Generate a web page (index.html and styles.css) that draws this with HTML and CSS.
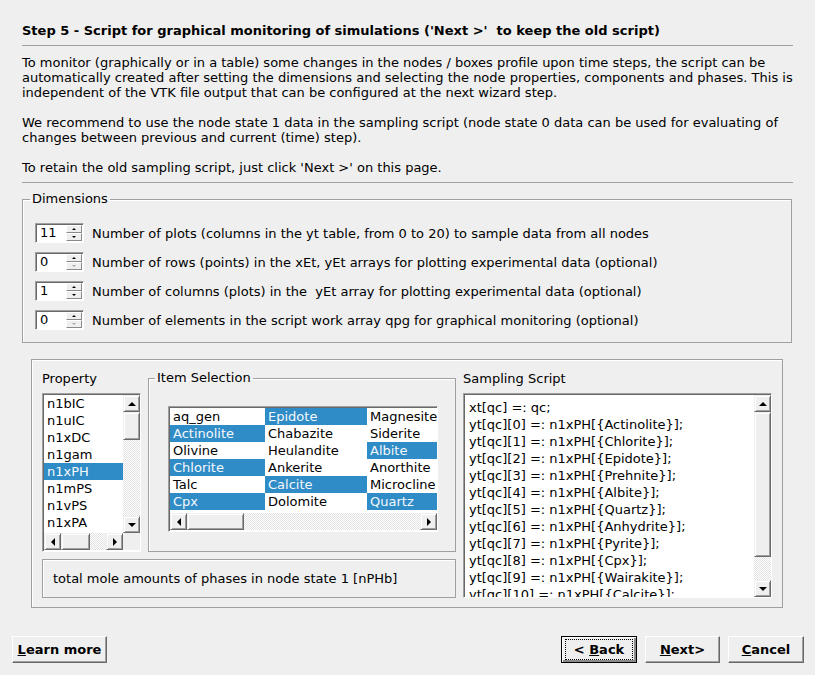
FILE: index.html
```html
<!DOCTYPE html>
<html>
<head>
<meta charset="utf-8">
<link rel="stylesheet" href="styles.css">
</head>
<body>
<div class="wizard">
  <div class="title">Step 5 - Script for graphical monitoring of simulations ('Next &gt;'&nbsp; to keep the old script)</div>
  <div class="rule"></div>
  <div class="intro">To monitor (graphically or in a table) some changes in the nodes / boxes profile upon time steps, the script can be<br>automatically created after setting the dimensions and selecting the node properties, components and phases. This is<br>independent of the VTK file output that can be configured at the next wizard step.<br><br>We recommend to use the node state 1 data in the sampling script (node state 0 data can be used for evaluating of<br>changes between previous and current (time) step).<br><br>To retain the old sampling script, just click 'Next &gt;' on this page.</div>
  <div class="rule rule2"></div>

  <fieldset class="dims">
    <legend>Dimensions</legend>
    <div class="spin-row">
      <div class="spin"><span class="spin-val">11</span><span class="spin-btns"><span class="sbtn"><i class="up"></i></span><span class="sbtn"><i class="down"></i></span></span></div>
      <span>Number of plots (columns in the yt table, from 0 to 20) to sample data from all nodes</span>
    </div>
    <div class="spin-row">
      <div class="spin"><span class="spin-val">0</span><span class="spin-btns"><span class="sbtn"><i class="up"></i></span><span class="sbtn"><i class="down off"></i></span></span></div>
      <span>Number of rows (points) in the xEt, yEt arrays for plotting experimental data (optional)</span>
    </div>
    <div class="spin-row">
      <div class="spin"><span class="spin-val">1</span><span class="spin-btns"><span class="sbtn"><i class="up"></i></span><span class="sbtn"><i class="down"></i></span></span></div>
      <span>Number of columns (plots) in the &nbsp;yEt array for plotting experimental data (optional)</span>
    </div>
    <div class="spin-row">
      <div class="spin"><span class="spin-val">0</span><span class="spin-btns"><span class="sbtn"><i class="up"></i></span><span class="sbtn"><i class="down off"></i></span></span></div>
      <span>Number of elements in the script work array qpg for graphical monitoring (optional)</span>
    </div>
  </fieldset>

  <div class="panel">
    <div class="prop-col">
      <div class="lbl">Property</div>
      <div class="listbox sunken">
        <div class="lb-main">
          <div class="lb-view">
            <div class="row">n1bIC</div>
            <div class="row">n1uIC</div>
            <div class="row">n1xDC</div>
            <div class="row">n1gam</div>
            <div class="row sel">n1xPH</div>
            <div class="row">n1mPS</div>
            <div class="row">n1vPS</div>
            <div class="row">n1xPA</div>
          </div>
          <div class="vscroll">
            <span class="sb-btn"><i class="a-up"></i></span>
            <span class="sb-btn handle-s"></span>
            <span class="track"></span>
            <span class="sb-btn"><i class="a-down"></i></span>
          </div>
        </div>
        <div class="lb-bottom">
          <div class="hscroll">
            <span class="sb-btn"><i class="a-left"></i></span>
            <span class="sb-btn handle-h1"></span>
            <span class="track"></span>
            <span class="sb-btn"><i class="a-right"></i></span>
          </div>
          <span class="corner"></span>
        </div>
      </div>
    </div>

    <fieldset class="items">
      <legend>Item Selection</legend>
      <div class="table sunken">
        <div class="tb-view">
          <div class="trow"><span class="c1">aq_gen</span><span class="c2 sel">Epidote</span><span class="c3">Magnesite</span></div>
          <div class="trow"><span class="c1 sel">Actinolite</span><span class="c2">Chabazite</span><span class="c3">Siderite</span></div>
          <div class="trow"><span class="c1">Olivine</span><span class="c2">Heulandite</span><span class="c3 sel">Albite</span></div>
          <div class="trow"><span class="c1 sel">Chlorite</span><span class="c2">Ankerite</span><span class="c3">Anorthite</span></div>
          <div class="trow"><span class="c1">Talc</span><span class="c2 sel">Calcite</span><span class="c3">Microcline</span></div>
          <div class="trow"><span class="c1 sel">Cpx</span><span class="c2">Dolomite</span><span class="c3 sel">Quartz</span></div>
        </div>
        <div class="hscroll">
          <span class="sb-btn"><i class="a-left"></i></span>
          <span class="sb-btn handle-h2"></span>
          <span class="track"></span>
          <span class="sb-btn"><i class="a-right"></i></span>
        </div>
      </div>
    </fieldset>

    <div class="script-col">
      <div class="lbl">Sampling Script</div>
      <div class="script sunken">
        <div class="script-text">xt[qc] =: qc;<br>yt[qc][0] =: n1xPH[{Actinolite}];<br>yt[qc][1] =: n1xPH[{Chlorite}];<br>yt[qc][2] =: n1xPH[{Epidote}];<br>yt[qc][3] =: n1xPH[{Prehnite}];<br>yt[qc][4] =: n1xPH[{Albite}];<br>yt[qc][5] =: n1xPH[{Quartz}];<br>yt[qc][6] =: n1xPH[{Anhydrite}];<br>yt[qc][7] =: n1xPH[{Pyrite}];<br>yt[qc][8] =: n1xPH[{Cpx}];<br>yt[qc][9] =: n1xPH[{Wairakite}];<br>yt[qc][10] =: n1xPH[{Calcite}];</div>
        <div class="vscroll">
          <span class="sb-btn"><i class="a-up"></i></span>
          <span class="sb-btn handle-v2"></span>
          <span class="track"></span>
          <span class="sb-btn"><i class="a-down"></i></span>
        </div>
      </div>
    </div>

    <div class="desc">total mole amounts of phases in node state 1 [nPHb]</div>
  </div>
</div>

<div class="buttons">
  <button class="btn learn"><u>L</u>earn more</button>
  <div class="btn-group">
    <button class="btn back default"><span class="focus"><span>&lt;&nbsp;<u>B</u>ack</span></span></button>
    <button class="btn next"><u>N</u>ext&gt;</button>
    <button class="btn cancel"><u>C</u>ancel</button>
  </div>
</div>
</body>
</html>
```
FILE: styles.css
```css
html, body {
  margin: 0;
  padding: 0;
  background: #efefef;
}
body {
  width: 815px;
  height: 675px;
  overflow: hidden;
  font-family: "DejaVu Sans", sans-serif;
  font-size: 13px;
  line-height: 15px;
  color: #000;
}
.wizard {
  padding: 23px 22px 0 22px;
}
.title {
  font-weight: bold;
  height: 15px;
  white-space: nowrap;
}
.rule {
  height: 1px;
  background: #a0a0a0;
  margin-top: 7px;
}
.intro {
  margin-top: 9px;
  white-space: nowrap;
}
.rule2 {
  margin-top: 7px;
}

/* Dimensions group */
fieldset {
  margin: 0;
  border: 1px solid #a0a0a0;
  box-shadow: inset 1px 1px 0 #fff;
}
legend {
  line-height: 14px;
  padding: 0 2px;
}
.dims {
  margin: 8px 1px 0 0;
  padding: 16px 0 12px 12px;
}
.dims legend {
  margin-left: -5px;
  line-height: 16px;
}
.spin-row {
  display: flex;
  align-items: center;
  gap: 8px;
  height: 20px;
  white-space: nowrap;
}
.spin-row + .spin-row {
  margin-top: 9px;
}
.spin {
  width: 49px;
  height: 20px;
  box-sizing: border-box;
  display: flex;
  background: #fff;
  border: 1px solid;
  border-color: #a0a0a0 #fff #fff #a0a0a0;
  box-shadow: inset 1px 1px 0 #696969;
  padding: 1px;
}
.spin-val {
  flex: 1;
  padding-left: 3px;
  line-height: 16px;
}
.spin-btns {
  width: 16px;
  display: flex;
  flex-direction: column;
  background: #efefef;
}
.sbtn {
  flex: 1;
  display: flex;
  align-items: center;
  justify-content: center;
  box-sizing: border-box;
  border: 1px solid;
  border-color: #fff #8a8a8a #8a8a8a #fff;
}
.sbtn i {
  width: 0;
  height: 0;
  border-left: 2px solid transparent;
  border-right: 2px solid transparent;
}
.sbtn .up { border-bottom: 2px solid #000; }
.sbtn .down { border-top: 2px solid #000; }
.sbtn .down.off { border-top-color: #a8a8a8; }

/* main panel */
.panel {
  margin: 16px 10px 0 9px;
  border: 1px solid #a0a0a0;
  box-shadow: inset 1px 1px 0 #fff;
  padding: 11px 10px 9px 10px;
  display: grid;
  grid-template-columns: 99px 308px 309px;
  grid-template-rows: 181px 39px;
  column-gap: 7px;
  row-gap: 7px;
}
.lbl {
  height: 15px;
  margin-bottom: 7px;
  white-space: nowrap;
}
.sunken {
  box-sizing: border-box;
  border: 1px solid;
  border-color: #a0a0a0 #fff #fff #a0a0a0;
  box-shadow: inset 1px 1px 0 #696969;
  padding: 1px 0 0 1px;
  background: #fff;
}

.prop-col {
  display: flex;
  flex-direction: column;
}
.listbox {
  height: 159px;
  display: flex;
  flex-direction: column;
}
.lb-main {
  display: flex;
  height: 138px;
}
.lb-view {
  flex: 1;
  overflow: hidden;
}
.row {
  height: 17px;
  line-height: 17px;
  padding-left: 3px;
  white-space: nowrap;
}
.sel {
  background: #308cc6;
  color: #f4f8fc;
}
.lb-bottom {
  display: flex;
  height: 17px;
}
.lb-bottom .hscroll {
  flex: 1;
}
.corner {
  width: 17px;
  background: #efefef;
}

/* scrollbars */
.vscroll {
  width: 17px;
  display: flex;
  flex-direction: column;
  flex-shrink: 0;
}
.hscroll {
  height: 17px;
  display: flex;
}
.track {
  flex: 1;
  background-color: #fff;
  background-image: repeating-conic-gradient(#e2e2e2 0 25%, #fff 0 50%);
  background-size: 2px 2px;
}
.sb-btn {
  width: 17px;
  height: 17px;
  flex-shrink: 0;
  box-sizing: border-box;
  background: #efefef;
  border: 1px solid;
  border-color: #efefef #696969 #696969 #efefef;
  box-shadow: inset 1px 1px 0 #fff, inset -1px -1px 0 #a0a0a0;
  display: flex;
  align-items: center;
  justify-content: center;
}
.sb-btn i {
  width: 0;
  height: 0;
}
.a-up { border-left: 4px solid transparent; border-right: 4px solid transparent; border-bottom: 4px solid #000; }
.a-down { border-left: 4px solid transparent; border-right: 4px solid transparent; border-top: 4px solid #000; }
.a-left { border-top: 4px solid transparent; border-bottom: 4px solid transparent; border-right: 4px solid #000; }
.a-right { border-top: 4px solid transparent; border-bottom: 4px solid transparent; border-left: 4px solid #000; }
.handle-s { height: 28px; }
.handle-h1 { width: 29px; }
.handle-h2 { width: 57px; }
.handle-v2 { height: 145px; }

/* item selection */
.items {
  padding: 21px 18px 19px 19px;
  min-width: 0;
}
.items legend {
  margin-left: -13px;
}
.table {
  height: 126px;
  width: 270px;
  display: flex;
  flex-direction: column;
}
.tb-view {
  height: 105px;
  overflow: hidden;
}
.trow {
  display: flex;
  height: 17px;
  line-height: 17px;
  white-space: nowrap;
}
.trow span {
  padding-left: 3px;
  box-sizing: border-box;
  flex-shrink: 0;
}
.c1 { width: 95px; }
.c2 { width: 102px; }
.c3 { width: 90px; }

/* script */
.script-col {
  grid-row: 1 / 3;
  grid-column: 3;
  display: flex;
  flex-direction: column;
}
.script {
  flex: 1;
  display: flex;
  overflow: hidden;
}
.script-text {
  flex: 1;
  padding: 4px 0 0 4px;
  line-height: 17px;
  white-space: nowrap;
  overflow: hidden;
}

.desc {
  grid-column: 1 / 3;
  grid-row: 2;
  box-sizing: border-box;
  border: 1px solid #a0a0a0;
  box-shadow: inset 1px 1px 0 #fff;
  display: flex;
  align-items: center;
  padding-left: 10px;
  white-space: nowrap;
}

/* buttons */
.buttons {
  margin-top: 28px;
  padding: 0 11px 0 12px;
  display: flex;
  justify-content: space-between;
}
.btn-group {
  display: flex;
  gap: 8px;
}
.btn {
  height: 27px;
  box-sizing: border-box;
  margin: 0;
  padding: 0;
  font-family: "DejaVu Sans", sans-serif;
  font-size: 13px;
  font-weight: bold;
  color: #000;
  background: #efefef;
  border: 1px solid;
  border-color: #fff #696969 #696969 #fff;
  box-shadow: inset -1px -1px 0 #a0a0a0;
}
.learn { width: 95px; }
.back { width: 76px; }
.next { width: 75px; }
.cancel { width: 76px; }
.default {
  border: 1px solid #000;
  box-shadow: inset 1px 1px 0 #fff, inset -2px -2px 0 #8a8a8a;
  padding: 2px 3px;
  display: flex;
}
.focus {
  flex: 1;
  border: 1px dotted #000;
  display: flex;
  align-items: center;
  justify-content: center;
}
```
